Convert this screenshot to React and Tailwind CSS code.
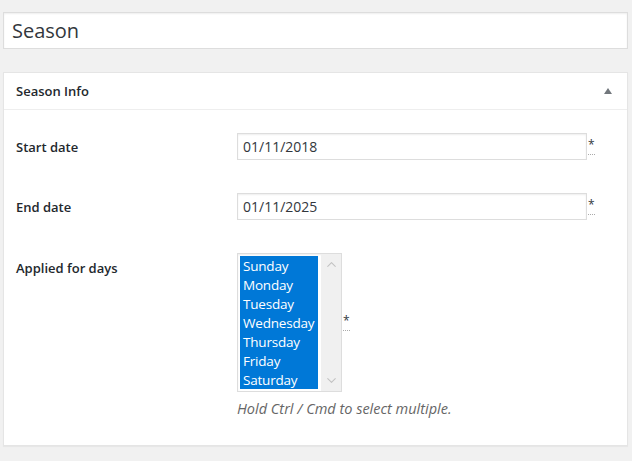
import { ChevronDown, ChevronUp } from 'lucide-react'

const DAYS = ['Sunday', 'Monday', 'Tuesday', 'Wednesday', 'Thursday', 'Friday', 'Saturday']

const FONT = "font-['Open_Sans',_'Noto_Sans',_sans-serif]"

function Required() {
  return (
    <abbr
      title="required"
      className="ml-[1px] text-[12px] leading-none text-[#32373c] no-underline border-b border-dotted border-[#aaa] pb-[3px] self-center"
    >
      *
    </abbr>
  )
}

function DateField({ label, value }) {
  return (
    <div className="flex items-center">
      <label className="w-[233px] pl-3 pt-[2px] text-[13px] font-semibold text-[#23282d]">{label}</label>
      <div className="flex items-center">
        <input
          readOnly
          value={value}
          className="w-[350px] h-[27px] px-[5px] border border-[#ddd] bg-white text-[14px] text-[#32373c] shadow-[inset_0_1px_2px_rgba(0,0,0,0.07)] outline-none"
        />
        <Required />
      </div>
    </div>
  )
}

function DaysList() {
  return (
    <div className="flex w-[105px] h-[139px] border border-[#ddd] bg-white shadow-[inset_0_1px_2px_rgba(0,0,0,0.07)]">
      <ul className="m-[2px] mr-0 w-[78px] bg-[#0078d7] list-none p-0 pt-[1px]">
        {DAYS.map((day) => (
          <li key={day} className="pl-[3px] h-[19px] leading-[19px] text-[13.5px] tracking-[-0.2px] text-white whitespace-nowrap">
            {day}
          </li>
        ))}
      </ul>
      <div className="ml-[3px] w-[20px] bg-[#f0f0f0] flex flex-col items-center justify-between py-[3px]">
        <ChevronUp size={15} strokeWidth={1.75} className="text-[#c2c2c2]" />
        <ChevronDown size={15} strokeWidth={1.75} className="text-[#c2c2c2]" />
      </div>
    </div>
  )
}

export default function App() {
  return (
    <div className={`${FONT} bg-[#f1f1f1] w-full h-[461px] pt-3 pl-[3px] pr-[4px]`}>
      <input
        readOnly
        value="Season"
        className="w-full h-[37px] px-[8px] border border-[#ddd] bg-white text-[20px] text-[#32373c] shadow-[inset_0_1px_2px_rgba(0,0,0,0.07)] outline-none"
      />

      <section className="mt-[23px] h-[374px] border border-[#e5e5e5] bg-white shadow-[0_1px_1px_rgba(0,0,0,0.04)]">
        <header className="h-[37px] flex items-center justify-between pl-3 pr-[15px] border-b border-[#eee]">
          <h2 className="pt-[2px] text-[13px] font-semibold text-[#23282d]">Season Info</h2>
          <span className="w-0 h-0 border-l-[4px] border-r-[4px] border-b-[6px] border-l-transparent border-r-transparent border-b-[#72777c]" />
        </header>

        <div className="pt-[23px] flex flex-col gap-[33px]">
          <DateField label="Start date" value="01/11/2018" />
          <DateField label="End date" value="01/11/2025" />

          <div className="flex items-start">
            <label className="w-[233px] pl-3 pt-[6px] text-[13px] font-semibold text-[#23282d]">
              Applied for days
            </label>
            <div className="flex flex-col">
              <div className="flex items-center">
                <DaysList />
                <Required />
              </div>
              <p className="mt-[6px] text-[14.5px] italic text-[#666]">Hold Ctrl / Cmd to select multiple.</p>
            </div>
          </div>
        </div>
      </section>
    </div>
  )
}
